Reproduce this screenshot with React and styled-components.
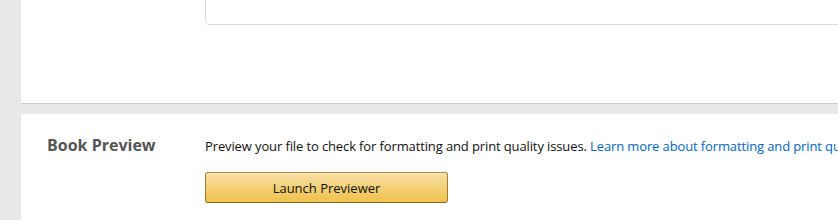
import styled, { createGlobalStyle } from "styled-components";

const GlobalStyle = createGlobalStyle`
  html, body {
    margin: 0;
    padding: 0;
    background: #e8e8e8;
    overflow: hidden;
  }
  body {
    font-family: "Open Sans", "Liberation Sans", sans-serif;
    color: #111;
  }
`;

const Page = styled.div`
  width: 1100px;
  padding-left: 21px;
  display: flex;
  flex-direction: column;
  gap: 10px;
`;

const TopPanel = styled.section`
  background: #fff;
  padding: 0 0 78px 184px;
  border-bottom: 1px solid #cccccc;
`;

const InfoBox = styled.div`
  margin-top: -28px;
  padding: 10px 20px 23px 52px;
  border: 1px solid #dddddd;
  border-radius: 0 0 4px 4px;
`;

const InfoLine = styled.p`
  margin: 0;
  font-size: 13px;
  line-height: 18px;
  color: #555;
  letter-spacing: -0.12px;
`;

const Panel = styled.section`
  background: #fff;
  padding: 21px 0 40px 26px;
  display: grid;
  grid-template-columns: 158px 1fr;
`;

const Heading = styled.h2`
  margin: 0;
  font-size: 16px;
  line-height: 20px;
  font-weight: 700;
  color: #555;
`;

const Body = styled.div`
  display: flex;
  flex-direction: column;
  align-items: flex-start;
`;

const Description = styled.p`
  margin: 2px 0 0;
  font-size: 13px;
  line-height: 18px;
  letter-spacing: -0.12px;
  white-space: nowrap;
`;

const Link = styled.a`
  color: #0066c0;
  text-decoration: none;
`;

const PrimaryButton = styled.button`
  margin-top: 17px;
  width: 243px;
  height: 31px;
  border: 1px solid #a88734;
  border-color: #a88734 #9c7e31 #846a29;
  border-radius: 3px;
  background: linear-gradient(to bottom, #f7dfa5, #f0c14b);
  box-shadow: inset 0 1px 0 rgba(255, 255, 255, 0.4);
  font-family: inherit;
  font-size: 13px;
  color: #111;
  cursor: pointer;
`;

export default function App() {
  return (
    <>
      <GlobalStyle />
      <Page>
        <TopPanel>
          <InfoBox>
            <InfoLine>
              Need help with your cover? Download a <Link href="#">cover template</Link>.
            </InfoLine>
          </InfoBox>
        </TopPanel>
        <Panel>
          <Heading>Book Preview</Heading>
          <Body>
            <Description>
              Preview your file to check for formatting and print quality issues.{" "}
              <Link href="#">Learn more about formatting and print quality issues</Link>
            </Description>
            <PrimaryButton>Launch Previewer</PrimaryButton>
          </Body>
        </Panel>
      </Page>
    </>
  );
}
